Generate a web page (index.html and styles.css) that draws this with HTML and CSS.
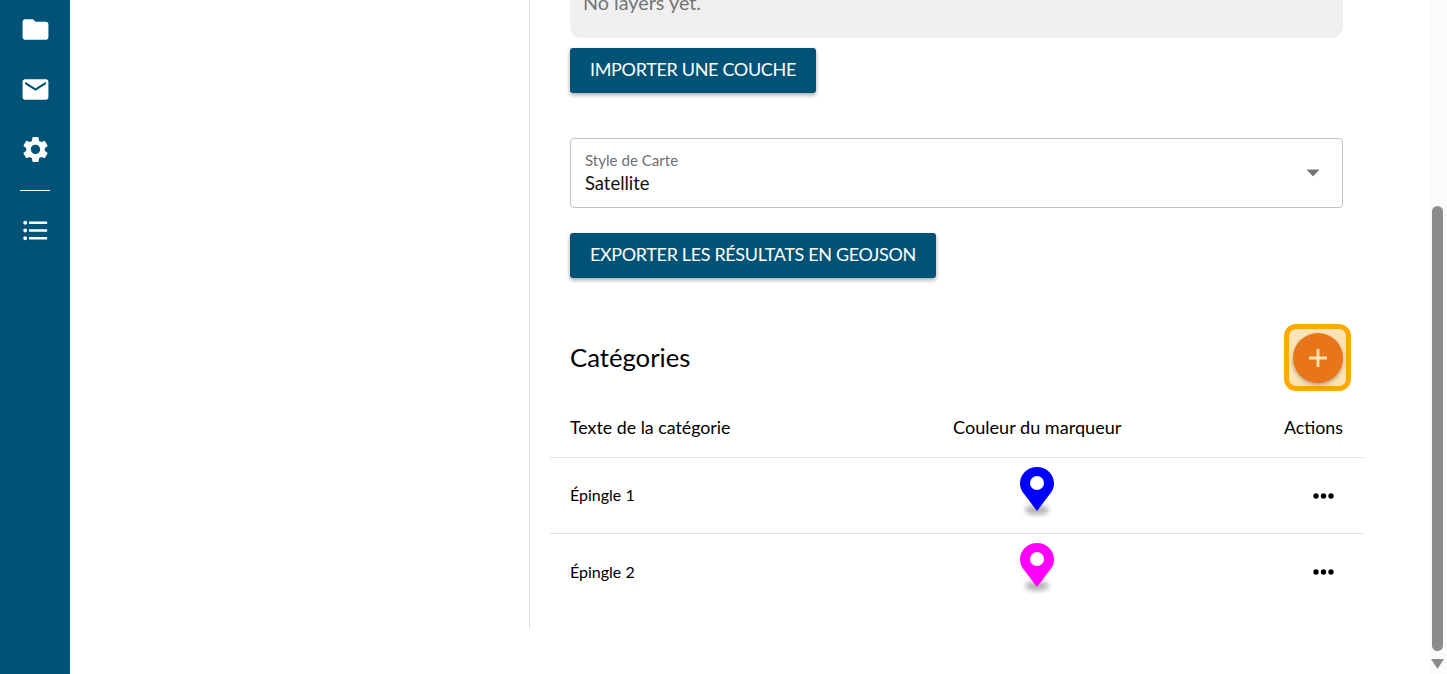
FILE: index.html
```html
<!DOCTYPE html>
<html lang="fr">
<head>
<meta charset="utf-8">
<title>Catégories</title>
<link rel="stylesheet" href="styles.css">
</head>
<body>
<div class="app">
  <nav class="sidebar">
    <svg class="nav-icon" viewBox="0 0 24 24"><path d="M10 4H4c-1.1 0-1.99.9-1.99 2L2 18c0 1.1.9 2 2 2h16c1.1 0 2-.9 2-2V8c0-1.1-.9-2-2-2h-8l-2-2z"/></svg>
    <svg class="nav-icon" viewBox="0 0 24 24"><path d="M20 4H4c-1.1 0-1.99.9-1.99 2L2 18c0 1.1.9 2 2 2h16c1.1 0 2-.9 2-2V6c0-1.1-.9-2-2-2zm0 4l-8 5-8-5V6l8 5 8-5v2z"/></svg>
    <svg class="nav-icon" viewBox="0 0 24 24"><path d="M19.14 12.94c.04-.3.06-.61.06-.94 0-.32-.02-.64-.07-.94l2.03-1.58c.18-.14.23-.41.12-.61l-1.92-3.32c-.12-.22-.37-.29-.59-.22l-2.39.96c-.5-.38-1.03-.7-1.62-.94l-.36-2.54c-.04-.24-.24-.41-.48-.41h-3.84c-.24 0-.43.17-.47.41l-.36 2.54c-.59.24-1.13.57-1.62.94l-2.39-.96c-.22-.08-.47 0-.59.22L2.74 8.87c-.12.21-.08.47.12.61l2.03 1.58c-.05.3-.09.63-.09.94s.02.64.07.94l-2.03 1.58c-.18.14-.23.41-.12.61l1.92 3.32c.12.22.37.29.59.22l2.39-.96c.5.38 1.03.7 1.62.94l.36 2.54c.05.24.24.41.48.41h3.84c.24 0 .44-.17.47-.41l.36-2.54c.59-.24 1.13-.56 1.62-.94l2.39.96c.22.08.47 0 .59-.22l1.92-3.32c.12-.22.07-.47-.12-.61l-2.01-1.58zM12 15.6c-1.98 0-3.6-1.62-3.6-3.6s1.62-3.6 3.6-3.6 3.6 1.62 3.6 3.6-1.62 3.6-3.6 3.6z"/></svg>
    <div class="nav-divider"></div>
    <svg class="nav-icon" viewBox="0 0 24 24"><path d="M4 10.5c-.83 0-1.5.67-1.5 1.5s.67 1.5 1.5 1.5 1.5-.67 1.5-1.5-.67-1.5-1.5-1.5zm0-6c-.83 0-1.5.67-1.5 1.5S3.17 7.5 4 7.5 5.5 6.83 5.5 6 4.83 4.5 4 4.5zm0 12c-.83 0-1.5.68-1.5 1.5s.68 1.5 1.5 1.5 1.5-.68 1.5-1.5-.67-1.5-1.5-1.5zM7 19h14v-2H7v2zm0-6h14v-2H7v2zm0-8v2h14V5H7z"/></svg>
  </nav>

  <div class="left-pane"></div>

  <main class="content">
    <div class="empty-box">No layers yet.</div>
    <button class="btn btn-import">IMPORTER UNE COUCHE</button>

    <div class="select">
      <div class="select-text">
        <span class="select-label">Style de Carte</span>
        <span class="select-value">Satellite</span>
      </div>
      <svg class="select-arrow" viewBox="0 0 14 8"><path d="M0.5 0.5h13L7 7.5z"/></svg>
    </div>

    <button class="btn btn-export">EXPORTER LES RÉSULTATS EN GEOJSON</button>

    <div class="section-head">
      <h2 class="section-title">Catégories</h2>
      <div class="fab-ring">
        <button class="fab" aria-label="Ajouter">
          <svg class="fab-plus" viewBox="0 0 18 18"><path d="M7.600 0h2.800v7.600H18v2.800h-7.600V18H7.600v-7.600H0V7.600h7.600z"/></svg>
        </button>
      </div>
    </div>

    <div class="table">
      <div class="row row-head">
        <span>Texte de la catégorie</span>
        <span class="col-color">Couleur du marqueur</span>
        <span class="cell-end">Actions</span>
      </div>
      <div class="row row-body row-line">
        <span class="cell-name">Épingle 1</span>
        <span class="cell-pin">
          <svg class="pin" viewBox="0 0 36 52"><defs><filter id="blur1" x="-40%" y="-80%" width="180%" height="260%"><feGaussianBlur stdDeviation="2.400"/></filter></defs><ellipse cx="18" cy="44" rx="12" ry="5" fill="#b4b4b4" filter="url(#blur1)"/><path fill="#0000ff" d="M18 1C8.600 1 1 8.400 1 17.400c0 4.600 2 8 4.500 11.200L18 45l12.500-16.400c2.500-3.200 4.500-6.600 4.500-11.200C35 8.400 27.400 1 18 1z"/><circle cx="18" cy="17" r="7" fill="#fff"/></svg>
        </span>
        <span class="cell-end"><svg class="dots" viewBox="0 0 21 6"><circle cx="3" cy="3" r="2.700"/><circle cx="10.500" cy="3" r="2.700"/><circle cx="18" cy="3" r="2.700"/></svg></span>
      </div>
      <div class="row row-body">
        <span class="cell-name">Épingle 2</span>
        <span class="cell-pin">
          <svg class="pin" viewBox="0 0 36 52"><defs><filter id="blur2" x="-40%" y="-80%" width="180%" height="260%"><feGaussianBlur stdDeviation="2.400"/></filter></defs><ellipse cx="18" cy="44" rx="12" ry="5" fill="#b4b4b4" filter="url(#blur2)"/><path fill="#ff00ff" d="M18 1C8.600 1 1 8.400 1 17.400c0 4.600 2 8 4.500 11.200L18 45l12.500-16.400c2.500-3.200 4.500-6.600 4.500-11.200C35 8.400 27.400 1 18 1z"/><circle cx="18" cy="17" r="7" fill="#fff"/></svg>
        </span>
        <span class="cell-end"><svg class="dots" viewBox="0 0 21 6"><circle cx="3" cy="3" r="2.700"/><circle cx="10.500" cy="3" r="2.700"/><circle cx="18" cy="3" r="2.700"/></svg></span>
      </div>
    </div>
  </main>

  <div class="scroll-track">
    <div class="scroll-thumb"></div>
    <svg class="scroll-arrow" viewBox="0 0 13 10"><path d="M0 0h13L6.500 10z"/></svg>
  </div>
</div>
</body>
</html>
```

FILE: styles.css
```css
* { box-sizing: border-box; }

html, body {
  margin: 0;
  height: 100%;
  overflow: hidden;
  background: #fff;
  font-family: Lato, "Liberation Sans", sans-serif;
  color: #000;
}

.app {
  display: flex;
  height: 674px;
  overflow: hidden;
}

.sidebar {
  flex: 0 0 70px;
  background: #005377;
  display: flex;
  flex-direction: column;
  align-items: center;
  padding-top: 14px;
  gap: 29px;
}

.nav-icon {
  width: 31px;
  height: 31px;
  fill: #fff;
  display: block;
}

.nav-divider {
  width: 30px;
  height: 1px;
  background: #fff;
  margin-top: -4px;
  margin-bottom: -5px;
}

.left-pane {
  flex: 0 0 460px;
  height: 628px;
  border-right: 1px solid #dcdcdc;
}

.content {
  flex: 0 0 900px;
  padding-left: 40px;
  padding-right: 87px;
  margin-top: -24px;
}

.empty-box {
  height: 62px;
  padding: 15px 13px 25px;
  background: #efefef;
  border-radius: 0 0 12px 12px;
  font-size: 19.8px;
  line-height: 22px;
  color: #757575;
}

.btn {
  display: block;
  height: 45px;
  padding: 0 20px 4px;
  border: 0;
  border-radius: 3px;
  background: #005377;
  color: #fff;
  font-family: inherit;
  font-size: 18px;
  font-weight: 400;
  letter-spacing: -0.36px;
  box-shadow: 0 2px 4px rgba(0, 0, 0, 0.35);
}

.btn-import {
  margin-top: 10px;
  letter-spacing: -0.33px;
}

.btn-export {
  margin-top: 25px;
}

.select {
  margin-top: 45px;
  height: 70px;
  border: 1px solid #c4c4c4;
  border-radius: 4px;
  padding: 13px 22px 0 14px;
  display: flex;
  justify-content: space-between;
  align-items: flex-start;
}

.select-text {
  display: flex;
  flex-direction: column;
}

.select-label {
  font-size: 15.1px;
  line-height: 16px;
  color: #6f6f6f;
}

.select-value {
  font-size: 18.4px;
  line-height: 30px;
  color: #111;
}

.select-arrow {
  width: 14px;
  height: 8px;
  margin-top: 17px;
  fill: #757575;
}

.section-head {
  margin-top: 46px;
  display: flex;
  justify-content: space-between;
  align-items: center;
}

.section-title {
  margin: 0;
  padding-bottom: 2px;
  font-size: 25.7px;
  font-weight: 400;
  line-height: 30px;
}

.fab-ring {
  width: 67px;
  height: 67px;
  margin-right: -8px;
  border: 5px solid #ffa800;
  border-radius: 12px;
  background: #fde4b2;
  display: flex;
  align-items: center;
  justify-content: center;
}

.fab {
  width: 50px;
  height: 50px;
  padding: 0;
  border: 0;
  border-radius: 50%;
  background: #e8751a;
  box-shadow: 0 2px 4px rgba(0, 0, 0, 0.3);
  display: flex;
  align-items: center;
  justify-content: center;
}

.fab-plus {
  width: 18px;
  height: 18px;
  fill: #fde4b2;
}

.table {
  margin: 0 -20px;
}

.row {
  display: grid;
  grid-template-columns: 383px 168px 1fr;
  padding: 0 20px;
  align-items: center;
}

.row-head {
  height: 67px;
  padding-top: 6px;
  font-size: 17.8px;
  border-bottom: 1px solid #e0e0e0;
}

.col-color {
  font-size: 18.1px;
  white-space: nowrap;
}

.row-body {
  height: 76px;
  font-size: 16px;
}

.cell-name {
  padding-bottom: 2px;
}

.row-line {
  border-bottom: 1px solid #e0e0e0;
}

.cell-end {
  display: flex;
  justify-content: flex-end;
}

.cell-pin {
  display: flex;
  justify-content: center;
}

.pin {
  width: 36px;
  height: 52px;
  display: block;
  margin-bottom: 8px;
}

.dots {
  width: 21px;
  height: 6px;
  margin-right: 9px;
}

.scroll-track {
  margin-left: auto;
  flex: 0 0 17px;
  background: #fbfbfb;
  display: flex;
  flex-direction: column;
  align-items: center;
  padding: 206px 2px 0 0;
}

.scroll-thumb {
  width: 11px;
  height: 445px;
  border-radius: 6px;
  background: #8c8c8c;
}

.scroll-arrow {
  width: 13px;
  height: 10px;
  flex: none;
  margin-top: 8px;
  fill: #8c8c8c;
}
```
